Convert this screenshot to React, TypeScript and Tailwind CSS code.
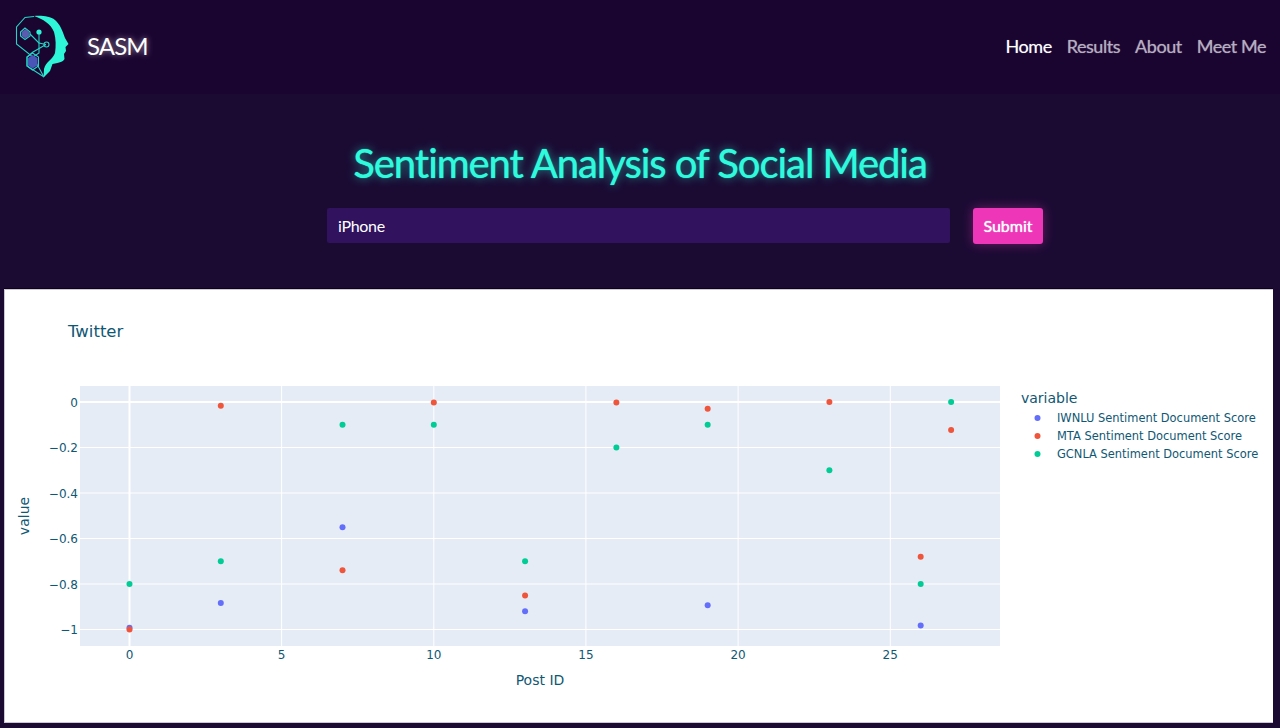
const IWNLU = "#636efa";
const MTA = "#ef553b";
const GCNLA = "#00cc96";

// [post id, value] per series, read off the plot
const series: { color: string; points: [number, number][] }[] = [
  {
    color: IWNLU,
    points: [[0, -0.992], [3, -0.884], [7, -0.55], [13, -0.92], [19, -0.893], [26, -0.982]],
  },
  {
    color: MTA,
    points: [[0, -1], [3, -0.016], [7, -0.74], [10, -0.002], [13, -0.85], [16, -0.002], [19, -0.03], [23, 0], [26, -0.68], [27, -0.123]],
  },
  {
    color: GCNLA,
    points: [[0, -0.8], [3, -0.7], [7, -0.1], [10, -0.1], [13, -0.7], [16, -0.2], [19, -0.1], [23, -0.3], [26, -0.8], [27, 0]],
  },
];

// chart svg starts at x=4, y=290 on the page
const px = (x: number) => 125.5 + x * 30.43;
const py = (y: number) => 112 - y * 227.5;

const tickFill = "#0f5874";

function Logo() {
  return (
    <svg width="56" height="64" viewBox="14 14 56 64" className="shrink-0">
      <path
        d="M34 15 C42 14.5 50 15 55 19 C60 23 63 31 65 37 L68.5 43 L65.5 46 L66 50 L64 53 L64.5 58 C63 61 60 61.5 52.5 63 L50 70 L43.5 76.5 L44 68 C45 64 47 62 49 60 C52 57 54 55 55 52 C56 45 56 38 54 31 C51 23 43 18 34 15 Z"
        fill="#2ef5d8"
      />
      <g fill="none" stroke="#24d6c6" strokeWidth="1.1">
        <path d="M34 15.5 L25 16.5 L16.5 26 L16.5 43 L33 56 L44 76 L27 65 L27 56 L33 51 L46 43.5" />
        <path d="M25 27 L20.5 31 L20.5 35 L25 38.5 L30 35 L30 31 Z" />
        <path d="M30 33 L39 42 L39 52 L33 56" />
        <path d="M39 31 L39 42 L46 43.5" />
        <circle cx="46.5" cy="43.5" r="2.5" />
        <path d="M27 56 L32.5 52 L38.5 56 L38.5 65 L32.5 69 L27 65 Z" />
      </g>
      <circle cx="39" cy="31" r="2.6" fill="#2ef5d8" />
      <path d="M25.5 28 L21.5 31 L21.5 35 L25.5 37.5 L29 35 L29 31 Z" fill="#5b5bb0" />
      <path d="M32.5 54 L28 57 L28 64.5 L32.5 67.5 L37.5 64.5 L37.5 57 Z" fill="#4a55b8" />
    </svg>
  );
}

function Chart() {
  const xTicks = [0, 5, 10, 15, 20, 25];
  const yTicks: [number, string][] = [[0, "0"], [-0.2, "−0.2"], [-0.4, "−0.4"], [-0.6, "−0.6"], [-0.8, "−0.8"], [-1, "−1"]];
  const legend: [string, string][] = [
    ["IWNLU Sentiment Document Score", IWNLU],
    ["MTA Sentiment Document Score", MTA],
    ["GCNLA Sentiment Document Score", GCNLA],
  ];
  return (
    <svg width="1269" height="433" viewBox="0 0 1269 433" className="block" style={{ fontFamily: "'DejaVu Sans', sans-serif" }}>
      <text x="64" y="47" fontSize="16.5" fill={tickFill}>Twitter</text>
      <rect x="76" y="96" width="920" height="260" fill="#e5ecf6" />
      {xTicks.map((t) => (
        <line key={t} x1={px(t)} x2={px(t)} y1="96" y2="356" stroke="#fff" strokeWidth={t === 0 ? 2 : 1} />
      ))}
      {yTicks.map(([v]) => (
        <line key={v} x1="76" x2="996" y1={py(v)} y2={py(v)} stroke="#fff" strokeWidth={v === 0 ? 2 : 1} />
      ))}
      {xTicks.map((t) => (
        <text key={t} x={px(t)} y="369" fontSize="12" textAnchor="middle" fill={tickFill}>{t}</text>
      ))}
      {yTicks.map(([v, l]) => (
        <text key={v} x="74" y={py(v) + 4.5} fontSize="12" textAnchor="end" fill={tickFill}>{l}</text>
      ))}
      <text x="536" y="395" fontSize="14" textAnchor="middle" fill={tickFill}>Post ID</text>
      <text x="25" y="226" fontSize="14" textAnchor="middle" fill={tickFill} transform="rotate(-90 25 226)">value</text>
      {series.map((s) =>
        s.points.map(([x, y]) => <circle key={`${s.color}-${x}`} cx={px(x)} cy={py(y)} r="3" fill={s.color} />)
      )}
      <text x="1017" y="113" fontSize="14" fill={tickFill}>variable</text>
      {legend.map(([label, color], i) => (
        <g key={label}>
          <circle cx="1033.5" cy={128 + i * 18} r="3" fill={color} />
          <text x="1053" y={132 + i * 18} fontSize="11.45" fill={tickFill}>{label}</text>
        </g>
      ))}
    </svg>
  );
}

export default function App() {
  return (
    <div className="h-[728px] overflow-hidden bg-[#1b0b33] font-['Lato',sans-serif]">
      <nav className="h-[94px] bg-[#1a0430] flex items-center justify-between px-[14px]">
        <div className="flex items-center gap-[17px]">
          <Logo />
          <span className="mb-[2px] text-[24px] tracking-[-0.9px] text-white [text-shadow:0_0_6px_rgba(255,255,255,0.6)]">SASM</span>
        </div>
        <div className="mb-[2px] flex gap-[15px] text-[18px] tracking-[-0.45px] text-[#b5adc0] [text-shadow:0_0_1px_rgba(255,255,255,0.5)]">
          <a className="text-white">Home</a>
          <a>Results</a>
          <a>About</a>
          <a>Meet Me</a>
        </div>
      </nav>

      <div className="h-[195px] flex flex-col items-center pt-[43px]">
        <h1 className="text-[40px] leading-[52px] tracking-[-1.05px] text-[#2efadc] [text-shadow:0_0_1px_#2efadc,0_0_10px_rgba(46,250,220,0.6)]">
          Sentiment Analysis of Social Media
        </h1>
        <form className="ml-[90px] mt-[19px] flex items-start gap-[23px]">
          <input
            readOnly
            value="iPhone"
            className="w-[623px] h-[35px] px-[11px] rounded-[2px] bg-[#30125f] text-white text-[16px] tracking-[-0.3px] outline-none"
          />
          <button type="button" className="w-[70px] h-[36px] rounded-[3px] bg-[#ed36b8] text-white text-[16px] [text-shadow:0_0_1px_#fff] shadow-[0_0_12px_rgba(237,54,184,0.4)]">
            Submit
          </button>
        </form>
      </div>

      <div className="ml-[4px] w-[1269px] h-[434px] pt-[1px] bg-white shadow-[inset_1px_1px_0_#cbc7d6,inset_0_-1px_0_#cbc7d6,0_-1px_0_#0d0218]">
        <Chart />
      </div>
    </div>
  );
}
